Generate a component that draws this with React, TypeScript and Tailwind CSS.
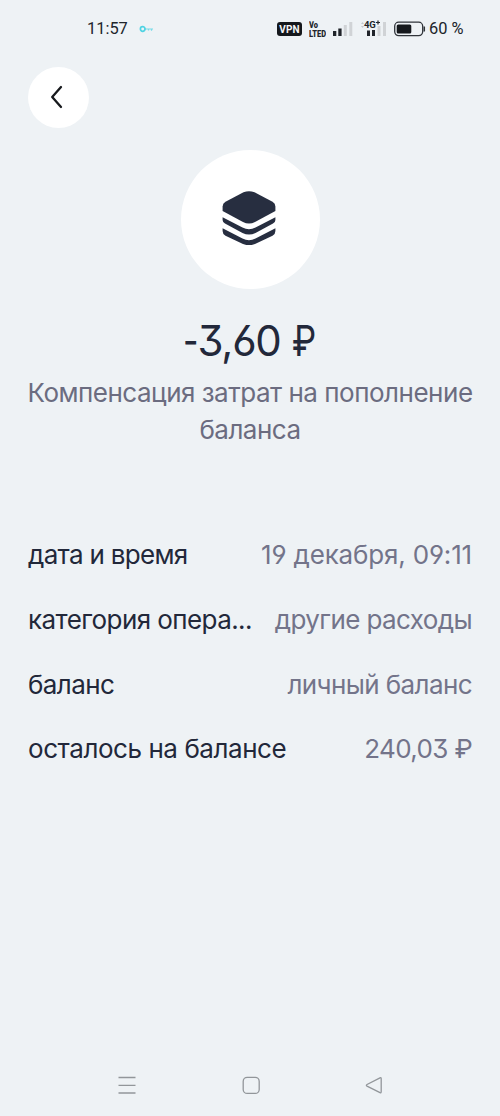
import React from "react";

type Row = { label: string; value: string; labelClass: string; valueClass: string };

const rows: Row[] = [
  { label: "дата и время", value: "19 декабря, 09:11", labelClass: "tracking-[-.7px]", valueClass: "tracking-[-.17px]" },
  { label: "категория опера...", value: "другие расходы", labelClass: "tracking-[-.58px]", valueClass: "tracking-[-.6px]" },
  { label: "баланс", value: "личный баланс", labelClass: "tracking-[-.6px]", valueClass: "tracking-[-.6px]" },
  { label: "осталось на балансе", value: "240,03 ₽", labelClass: "tracking-[-.44px]", valueClass: "tracking-[-.65px]" },
];

function StatusBar() {
  return (
    <header className="flex h-[58px] items-center pl-[87px] font-['Roboto',sans-serif] text-[#20242a]">
      <span className="w-[42px] text-[16.4px] leading-5 whitespace-nowrap">11:57</span>
      <svg className="ml-[10px] h-[8px] w-[16px]" viewBox="0 0 16 8" fill="none" stroke="#4fd3e3">
        <circle cx="3.7" cy="4" r="2.3" strokeWidth="1.7" />
        <path d="M6 4h8M9.5 4v1.5M12.5 4v1.8" strokeWidth="1.2" opacity=".75" />
      </svg>
      <span className="ml-[122px] flex h-[14px] w-[25px] items-center justify-center rounded-[3px] bg-[#15181c] text-[10px] font-bold tracking-[.2px] text-[#f4f6f8]">VPN</span>
      <span className="ml-[7px] flex h-[15px] w-[17px] origin-left scale-y-[1.1] flex-col justify-center text-[7.5px] leading-[7.5px] font-black">
        <span className="block h-[7.5px] overflow-hidden">Vo</span>
        <span className="block h-[7.5px] overflow-hidden whitespace-nowrap">LTED</span>
      </span>
      <svg className="ml-[6px] h-[18px] w-[22px]" viewBox="0 0 22 18">
        <path d="M1 11h3.3v5H1zM6.3 8.5h3.3V16H6.3z" fill="#20242a" />
        <path d="M11.8 5h3v11h-3zM17.3 2h3v14h-3z" fill="#d0d3d6" />
      </svg>
      <div className="relative ml-[6px] h-[18px] w-[28px]">
        <svg className="h-[18px] w-[28px]" viewBox="0 0 28 18">
          <path d="M1 4l1.5-2L4 4zM1 6l1.5 2L4 6z" fill="#c6cace" />
          <path d="M7 10.5h3V16H7zM12 10h3v6h-3z" fill="#20242a" />
          <path d="M17.5 6h3v10h-3zM23 2h3v14h-3z" fill="#d0d3d6" />
        </svg>
        <span className="absolute top-0 left-[4px] text-[9.5px] leading-[9px] font-bold tracking-[-.3px]">4G</span>
        <svg className="absolute top-0 left-[16px] size-[5px]" viewBox="0 0 5 5" stroke="#20242a" strokeWidth="1.2"><path d="M0 2.500h4M2 .5v4" /></svg>
      </div>
      <svg className="ml-[6px] h-[16px] w-[32px]" viewBox="0 0 32 16">
        <rect x=".7" y="1.2" width="28" height="13.4" rx="4" fill="none" stroke="#30343a" strokeWidth="1.3" />
        <rect x="2.7" y="3.4" width="14.6" height="9" rx="1.5" fill="#15181c" />
        <path d="M30.3 5.5v5" stroke="#30343a" strokeWidth="1.5" />
      </svg>
      <span className="ml-[3px] text-[16.4px] leading-5 whitespace-nowrap">60 %</span>
    </header>
  );
}

export default function App() {
  return (
    <div className="flex h-[1116px] w-[500px] flex-col overflow-hidden bg-[#eef2f5] font-['Inter','Liberation_Sans',sans-serif] text-[#22283a] [font-feature-settings:'cv03','cv04','cv09']">
      <StatusBar />
      <main className="flex flex-1 flex-col px-7">
        <button aria-label="Назад" className="mt-[9px] flex size-[61px] items-center justify-center rounded-full bg-white">
          <svg className="mr-[4px] mb-[1px] size-6" viewBox="0 0 24 24" fill="none" stroke="#17191d" strokeWidth="2.3" strokeLinecap="round" strokeLinejoin="round">
            <path d="M16 2L7.2 12l8.8 10" />
          </svg>
        </button>
        <div className="mt-[22px] flex size-[139px] items-center justify-center self-center rounded-full bg-white">
          <svg className="mr-[3px] mb-[3px] h-[54px] w-[54px]" viewBox="0 0 54 54" fill="#272e40">
            <path d="M21.5 1.3Q27-1 32.5 1.3L50.5 10.7Q53.4 12.3 53.4 15.4V20L33 31Q27 34 21 31L.6 20V15.4Q.6 12.3 3.5 10.7Z" />
            <path d="M.6 26.2L20.5 36.600Q27 39.800 33.500 36.600L53.400 26.200V29Q53.400 31.200 51 32.500L33.500 42Q27 45.200 20.500 42L3 32.500Q.6 31.200 .6 29Z" />
            <path d="M.6 37.200L20.500 47.600Q27 50.800 33.500 47.600L53.400 37.200V40Q53.400 43.200 50.500 44.800L33 53Q27 55.500 21 53L3.500 44.800Q.6 43.200 .6 40Z" />
          </svg>
        </div>
        <h1 className="mt-[28px] mr-[2px] flex justify-center text-[42px] leading-[48px] font-normal tracking-[-1.3px] whitespace-pre">
          <span className="inline-block w-[15px] origin-left scale-x-[.8]">-</span>
          <span>3,60</span>
          <span className="ml-[12px] inline-block w-[23px] origin-left scale-x-[.82]">₽</span>
        </h1>
        <p className="-mx-4 mt-[10px] text-center text-[26px] leading-[36.5px] tracking-[-.49px] whitespace-nowrap text-[#6b6c80]">
          Компенсация затрат на пополнение<br />баланса
        </p>
        <dl className="mt-[75px] flex flex-col">
          {rows.map((r) => (
            <div key={r.label} className="flex h-[64.7px] items-center justify-between text-[26px] leading-9 whitespace-nowrap">
              <dt><span className={r.labelClass}>{r.label}</span></dt>
              <dd className="text-[#73748a]"><span className={r.valueClass}>{r.value}</span></dd>
            </div>
          ))}
        </dl>
      </main>
      <nav className="flex h-[62px] items-center justify-between pr-[116px] pl-[117px]">
        <svg className="size-5" viewBox="0 0 20 20" stroke="#92969a" strokeWidth="1.3"><path d="M1.5 2.5h17M1.5 10.3h17M1.5 18h17" /></svg>
        <svg className="size-5" viewBox="0 0 20 20" fill="none" stroke="#92969a" strokeWidth="1.3"><rect x="2.2" y="2.4" width="16" height="16" rx="4" /></svg>
        <svg className="size-5" viewBox="0 0 20 20" fill="none" stroke="#92969a" strokeWidth="1.3" strokeLinejoin="round"><path d="M16 2.8L3 9.5q-1.3.8 0 1.6L16 17.7q1.2.4 1.2-1V3.8q0-1.4-1.2-1Z" /></svg>
      </nav>
    </div>
  );
}
